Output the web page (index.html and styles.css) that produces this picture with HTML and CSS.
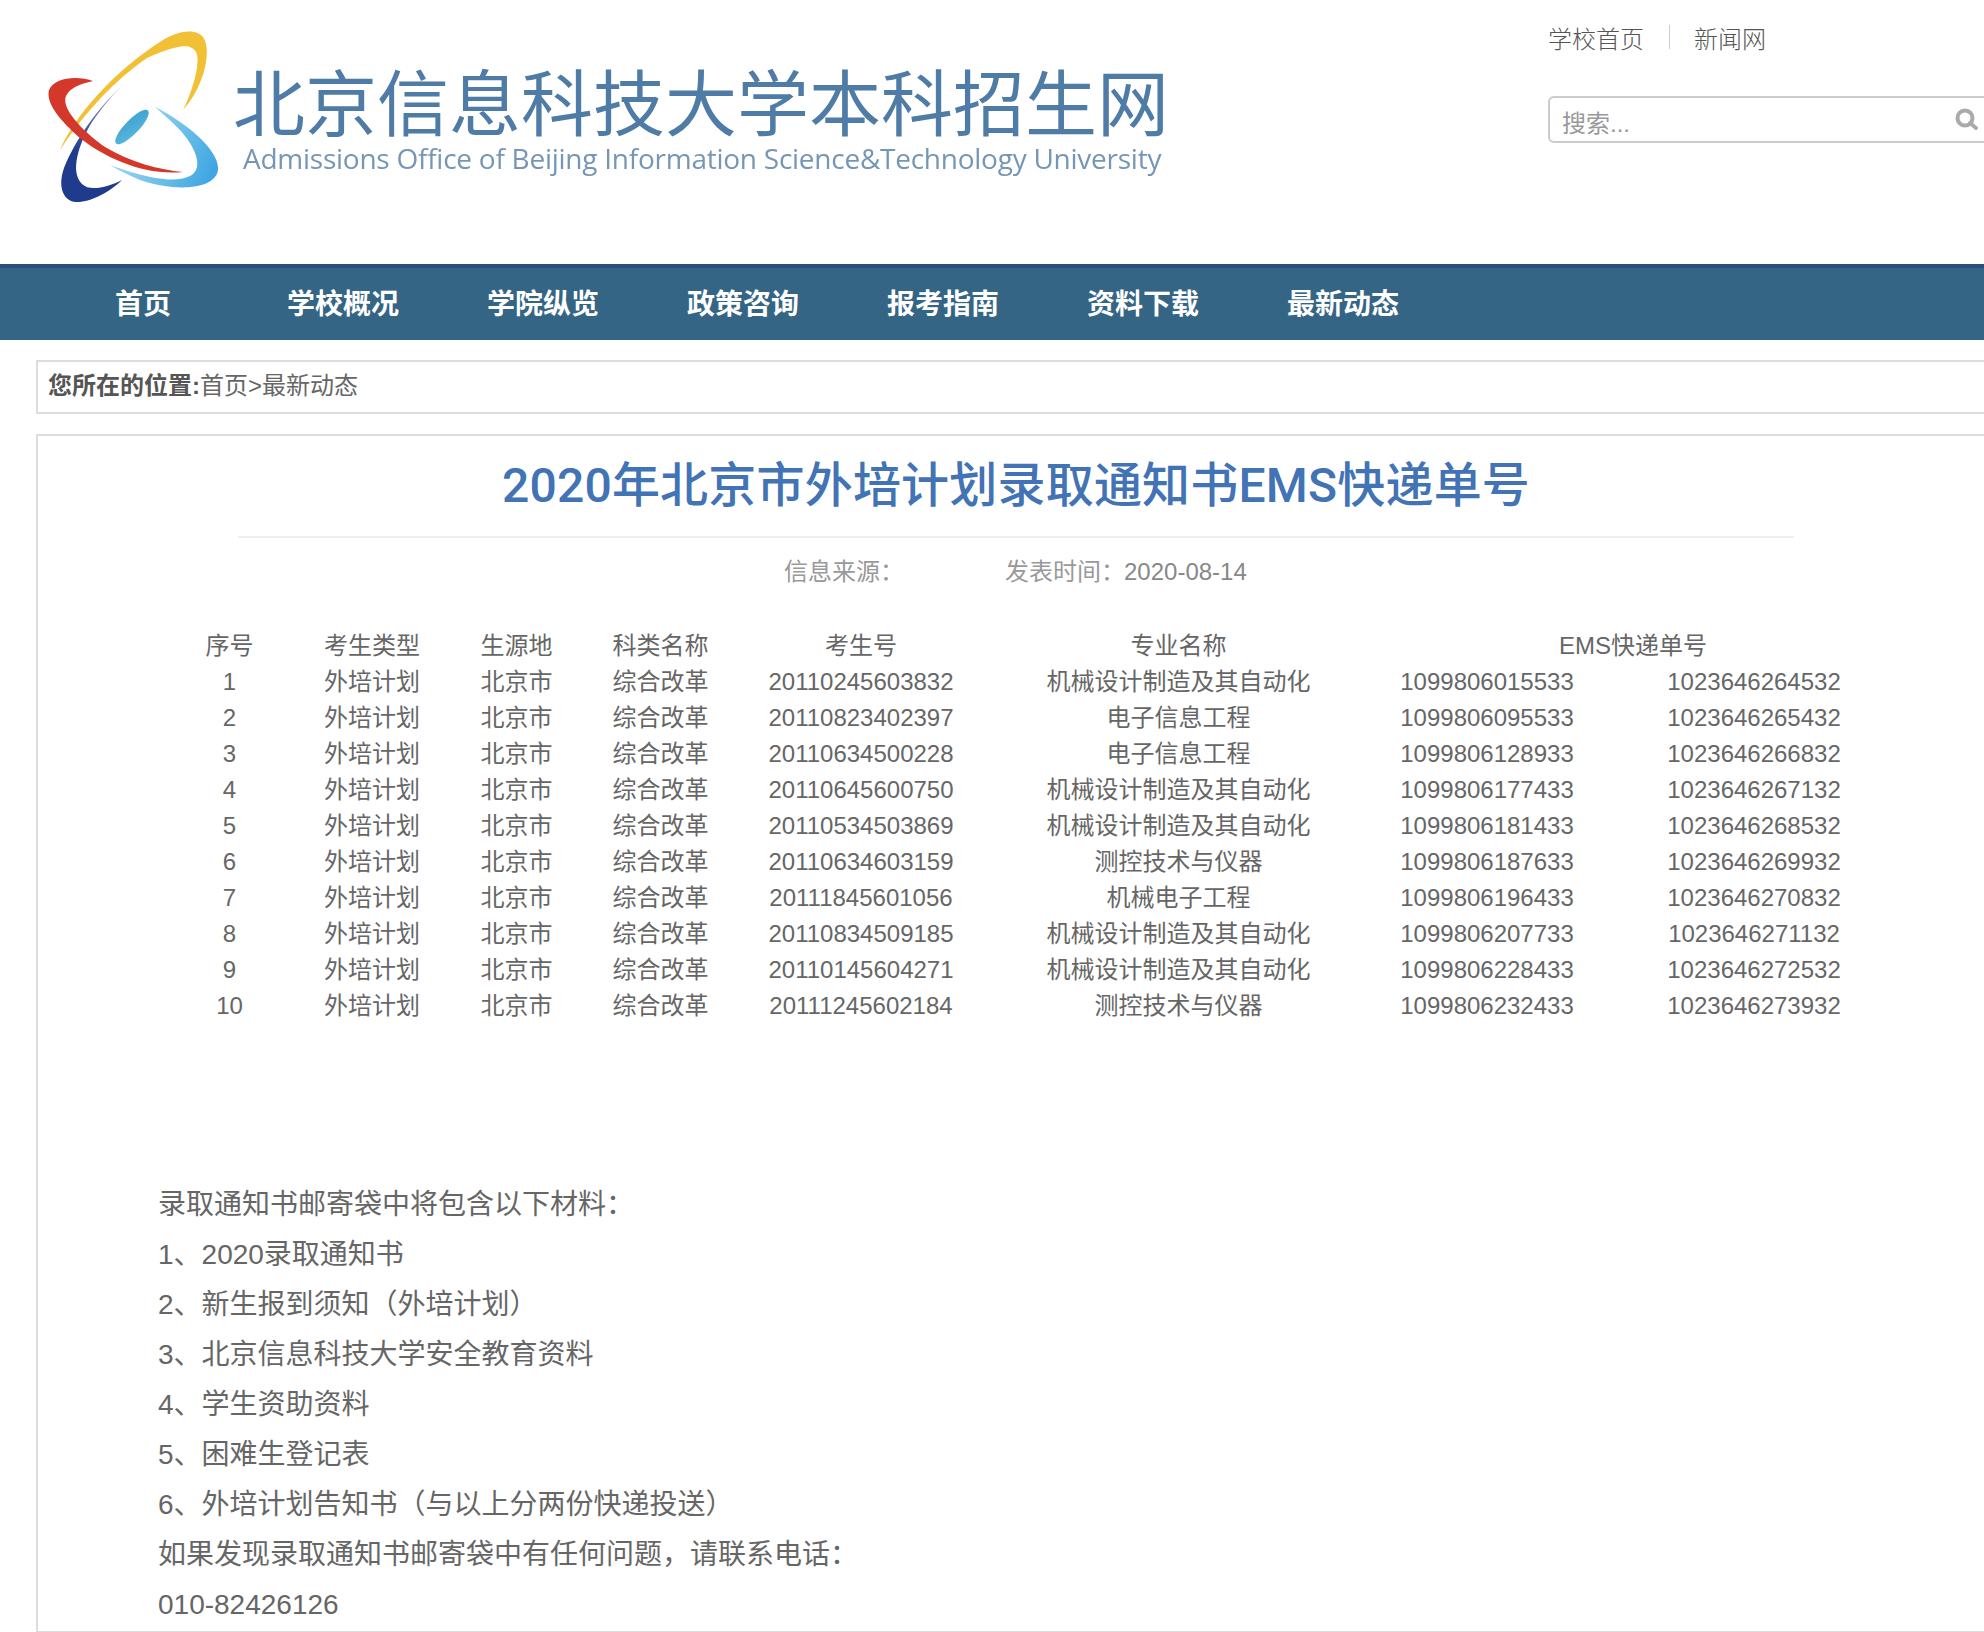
FILE: index.html
```html
<!DOCTYPE html>
<html lang="zh-CN">
<head>
    <meta charset="UTF-8">
    <meta name="viewport" content="width=device-width, initial-scale=1.0">
    <title>2020年北京市外培计划录取通知书EMS快递单号</title>
    <link rel="stylesheet" href="styles.css">
</head>
<body>
    <div class="page">
        <header class="header">
            <div class="logo">
                <svg class="logo-mark" width="190" height="190" viewBox="40 25 190 190">
                    <defs>
                        <linearGradient id="lens" x1="0" y1="1" x2="1" y2="0">
                            <stop offset="0" stop-color="#5ab9dd"/>
                            <stop offset="1" stop-color="#3e9fd2"/>
                        </linearGradient>
                        <linearGradient id="navy" gradientUnits="userSpaceOnUse" x1="123" y1="85" x2="78" y2="155">
                            <stop offset="0" stop-color="#b4b6d6"/>
                            <stop offset="0.55" stop-color="#5561a8"/>
                            <stop offset="1" stop-color="#1e3b8c"/>
                        </linearGradient>
                        <linearGradient id="sky" gradientUnits="userSpaceOnUse" x1="110" y1="120" x2="215" y2="170">
                            <stop offset="0" stop-color="#b5e0f0"/>
                            <stop offset="0.6" stop-color="#6cc0e8"/>
                            <stop offset="1" stop-color="#3fa6e2"/>
                        </linearGradient>
                    </defs>
                    <path fill="#f2c034" d="M60 150C75 115 115 70 163 40C178 31 195 28 203 37C212 50 205 85 183 110C193 90 201 62 196 52C190 41 172 47 147 58C115 80 85 112 60 150Z"/>
                    <path fill="url(#navy)" d="M123 85C100 105 75 140 64 168C58 185 62 200 75 202C90 203 110 192 122 180C108 187 90 192 82 184C70 172 78 145 92 122C102 108 112 95 123 85Z"/>
                    <path fill="url(#sky)" d="M155 107C185 122 220 150 218 170C215 190 175 192 140 180C128 175 118 170 110 165C130 172 170 186 190 176C205 168 195 145 177 127C170 120 162 113 155 107Z"/>
                    <path fill="#d4382b" d="M93 81C80 76 55 76 49 90C45 105 65 125 80 138C105 158 145 176 183 172C160 170 130 162 105 147C88 135 70 118 66 105C62 92 75 85 93 81Z"/>
                    <ellipse cx="132" cy="127" rx="23" ry="7" transform="rotate(-46 132 127)" fill="url(#lens)"/>
                </svg>
                <div class="logo-text">
                    <div class="logo-cn">北京信息科技大学本科招生网</div>
                    <div class="logo-en">Admissions Office of Beijing Information Science&amp;Technology University</div>
                </div>
            </div>
            <div class="header-right">
                <div class="top-links">
                    <a class="top-link" href="#">学校首页</a>
                    <span class="top-sep"></span>
                    <a class="top-link" href="#">新闻网</a>
                </div>
                <div class="search">
                    <span class="search-text">搜索...</span>
                    <svg class="search-icon" width="24" height="24" viewBox="0 0 24 24">
                        <circle cx="10" cy="10" r="7.5" fill="none" stroke="#aaa" stroke-width="4"/>
                        <path d="M15 15L21 20" stroke="#aaa" stroke-width="4" stroke-linecap="round"/>
                    </svg>
                </div>
            </div>
        </header>

        <nav class="nav">
            <a class="nav-item" href="#">首页</a>
            <a class="nav-item" href="#">学校概况</a>
            <a class="nav-item" href="#">学院纵览</a>
            <a class="nav-item" href="#">政策咨询</a>
            <a class="nav-item" href="#">报考指南</a>
            <a class="nav-item" href="#">资料下载</a>
            <a class="nav-item" href="#">最新动态</a>
        </nav>

        <div class="crumb"><b>您所在的位置:</b>首页&gt;最新动态</div>

        <main class="article">
            <h1 class="article-title">2020年北京市外培计划录取通知书EMS快递单号</h1>
            <div class="article-meta">
                <span class="meta-source">信息来源：</span>
                <span class="meta-time">发表时间：</span>
                <span class="meta-date">2020-08-14</span>
            </div>

            <table class="list">
                <colgroup>
                    <col class="c1"><col class="c2"><col class="c3"><col class="c4">
                    <col class="c5"><col class="c6"><col class="c7"><col class="c8">
                </colgroup>
                <tr><td>序号</td><td>考生类型</td><td>生源地</td><td>科类名称</td><td>考生号</td><td>专业名称</td><td colspan="2">EMS快递单号</td></tr>
                <tr><td>1</td><td>外培计划</td><td>北京市</td><td>综合改革</td><td>20110245603832</td><td>机械设计制造及其自动化</td><td>1099806015533</td><td>1023646264532</td></tr>
                <tr><td>2</td><td>外培计划</td><td>北京市</td><td>综合改革</td><td>20110823402397</td><td>电子信息工程</td><td>1099806095533</td><td>1023646265432</td></tr>
                <tr><td>3</td><td>外培计划</td><td>北京市</td><td>综合改革</td><td>20110634500228</td><td>电子信息工程</td><td>1099806128933</td><td>1023646266832</td></tr>
                <tr><td>4</td><td>外培计划</td><td>北京市</td><td>综合改革</td><td>20110645600750</td><td>机械设计制造及其自动化</td><td>1099806177433</td><td>1023646267132</td></tr>
                <tr><td>5</td><td>外培计划</td><td>北京市</td><td>综合改革</td><td>20110534503869</td><td>机械设计制造及其自动化</td><td>1099806181433</td><td>1023646268532</td></tr>
                <tr><td>6</td><td>外培计划</td><td>北京市</td><td>综合改革</td><td>20110634603159</td><td>测控技术与仪器</td><td>1099806187633</td><td>1023646269932</td></tr>
                <tr><td>7</td><td>外培计划</td><td>北京市</td><td>综合改革</td><td>20111845601056</td><td>机械电子工程</td><td>1099806196433</td><td>1023646270832</td></tr>
                <tr><td>8</td><td>外培计划</td><td>北京市</td><td>综合改革</td><td>20110834509185</td><td>机械设计制造及其自动化</td><td>1099806207733</td><td>1023646271132</td></tr>
                <tr><td>9</td><td>外培计划</td><td>北京市</td><td>综合改革</td><td>20110145604271</td><td>机械设计制造及其自动化</td><td>1099806228433</td><td>1023646272532</td></tr>
                <tr><td>10</td><td>外培计划</td><td>北京市</td><td>综合改革</td><td>20111245602184</td><td>测控技术与仪器</td><td>1099806232433</td><td>1023646273932</td></tr>
            </table>

            <div class="notes">
                <p>录取通知书邮寄袋中将包含以下材料：</p>
                <p>1、2020录取通知书</p>
                <p>2、新生报到须知（外培计划）</p>
                <p>3、北京信息科技大学安全教育资料</p>
                <p>4、学生资助资料</p>
                <p>5、困难生登记表</p>
                <p>6、外培计划告知书（与以上分两份快递投送）</p>
                <p>如果发现录取通知书邮寄袋中有任何问题，请联系电话：</p>
                <p>010-82426126</p>
            </div>
        </main>
    </div>
</body>
</html>
```

FILE: styles.css
```css
html, body {
    margin: 0;
    padding: 0;
    background-color: #fff;
}
body {
    height: 1632px;
    overflow: hidden;
    color: #666;
    font-family: "Liberation Sans", "Noto Sans CJK SC", sans-serif;
    font-size: 24px;
}
a {
    color: inherit;
    text-decoration: none;
}
.page {
    width: 2032px;
}

/* header */
.header {
    display: flex;
    height: 264px;
}
.logo {
    display: flex;
    width: 1548px;
    flex-shrink: 0;
    padding: 25px 0 0 40px;
    box-sizing: border-box;
}
.logo-mark {
    flex-shrink: 0;
    filter: blur(0.6px);
}
.logo-text {
    margin-left: 3px;
    padding-top: 32px;
    filter: blur(0.5px);
}
.logo-cn {
    color: #4f7ca6;
    font-family: "Noto Sans CJK SC", sans-serif;
    font-size: 72px;
    font-weight: 400;
    line-height: 83px;
    white-space: nowrap;
}
.logo-en {
    margin: 0 0 0 10px;
    color: #7596b6;
    font-family: "Open Sans", sans-serif;
    font-size: 28px;
    letter-spacing: -0.25px;
    line-height: 36px;
    white-space: nowrap;
}
.header-right {
    width: 471px;
    flex-shrink: 0;
}
.top-links {
    display: flex;
    align-items: center;
    height: 40px;
    margin-top: 17px;
    color: #555;
    font-family: "Noto Sans CJK SC", sans-serif;
    font-weight: 300;
}
.top-sep {
    width: 1px;
    height: 24px;
    margin: 0 24px 0 25px;
    background-color: #ccc;
}
.search {
    display: flex;
    align-items: center;
    justify-content: space-between;
    height: 47px;
    margin-top: 39px;
    padding: 0 38px 0 12px;
    box-sizing: border-box;
    border: 2px solid #ccc;
    border-radius: 6px;
}
.search-text {
    color: #999;
    padding-top: 3px;
}

/* nav */
.nav {
    display: flex;
    height: 76px;
    padding-left: 43px;
    box-sizing: border-box;
    background-color: #356585;
    border-top: 4px solid #2a5078;
}
.nav-item {
    width: 200px;
    color: #fff;
    font-size: 28px;
    font-weight: 700;
    line-height: 74px;
    text-align: center;
}

/* breadcrumb */
.crumb {
    height: 54px;
    margin: 20px 0 0 36px;
    padding-left: 10px;
    box-sizing: border-box;
    border: 2px solid #ddd;
    color: #666;
    line-height: 47px;
}
.crumb b {
    color: #555;
}

/* article */
.article {
    width: 1960px;
    height: 1199px;
    margin: 20px 0 0 36px;
    box-sizing: border-box;
    border: 2px solid #ddd;
}
.article-title {
    margin: 0;
    padding-top: 15px;
    color: #4273b5;
    font-family: Roboto, "Noto Sans CJK SC", sans-serif;
    font-size: 48px;
    font-weight: 500;
    letter-spacing: 0.2px;
    line-height: 70px;
    text-align: center;
}
.article-meta {
    display: flex;
    width: 1556px;
    margin: 15px auto 0;
    padding: 14px 0 0 546px;
    box-sizing: border-box;
    border-top: 2px solid #eee;
    color: #999;
    line-height: 40px;
    white-space: nowrap;
}
.meta-source {
    width: 221px;
    flex-shrink: 0;
}
.meta-time {
    width: 119px;
    flex-shrink: 0;
}
.meta-date {
    color: #888;
}
.list {
    margin: 36px 0 0 120px;
    border-collapse: collapse;
    table-layout: fixed;
    width: 1742px;
}
.list td {
    height: 36px;
    padding: 0;
    text-align: center;
    line-height: 36px;
}
.c1 { width: 143px; }
.c2 { width: 142px; }
.c3 { width: 147px; }
.c4 { width: 141px; }
.c5 { width: 260px; }
.c6 { width: 375px; }
.c7 { width: 242px; }
.c8 { width: 292px; }
.notes {
    margin: 156px 0 0 120px;
    font-size: 28px;
}
.notes p {
    margin: 0;
    line-height: 50px;
}
```
